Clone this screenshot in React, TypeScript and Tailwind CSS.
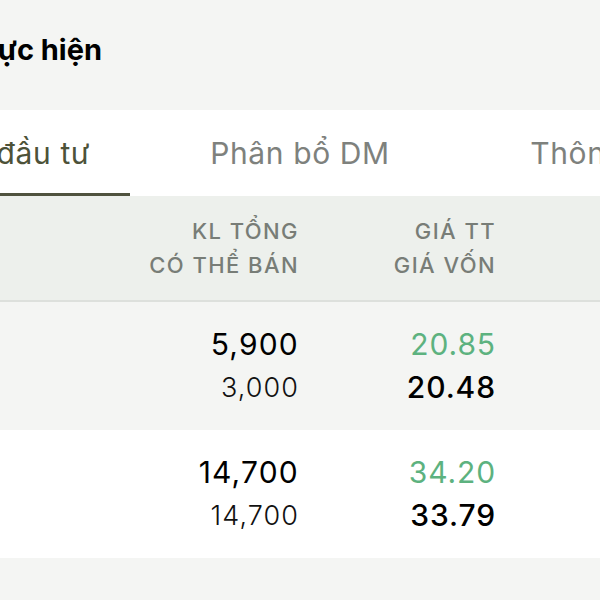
import { useState } from "react";

type Holding = {
  symbol: string;
  total: string;
  sellable: string;
  price: string;
  cost: string;
};

const holdings: Holding[] = [
  { symbol: "FPT", total: "5,900", sellable: "3,000", price: "20.85", cost: "20.48" },
  { symbol: "MWG", total: "14,700", sellable: "14,700", price: "34.20", cost: "33.79" },
];

const tabs = ["Danh mục đầu tư", "Phân bổ DM", "Thông tin khác"];

export default function App() {
  const [activeTab, setActiveTab] = useState(0);

  return (
    <div
      className="h-[600px] w-[600px] overflow-hidden bg-[#f4f5f3]"
      style={{ fontFamily: "Inter, Roboto, 'Noto Sans', sans-serif" }}
    >
      <div className="flex h-[110px] items-center pb-[10px]">
        <h1 className="ml-[-31px] whitespace-nowrap text-[29px] font-bold text-black">
          thực hiện
        </h1>
      </div>

      <div className="flex h-[86px] bg-white">
        {tabs.map((tab, i) => (
          <button
            key={tab}
            onClick={() => setActiveTab(i)}
            className={`flex h-full shrink-0 items-center whitespace-nowrap border-b-[3px] pt-[3px] text-[30px] tracking-[0.02em] ${
              i === 0 ? "w-[130px] justify-end pr-[40px]" : "w-[340px] justify-center"
            } ${
              activeTab === i
                ? "border-[#4f523e] text-[#4d5239]"
                : "border-transparent text-[#7e817d]"
            }`}
          >
            {tab}
          </button>
        ))}
      </div>

      <div className="flex h-[106px] items-center border-b-2 border-[#dde0dc] bg-[#edf0ec] text-[22px] font-medium uppercase leading-[34px] tracking-[0.065em] text-[#787d77]">
        <div className="w-[299px] shrink-0 text-right">
          <div>KL Tổng</div>
          <div>Có thể bán</div>
        </div>
        <div className="w-[197px] shrink-0 text-right">
          <div>Giá TT</div>
          <div>Giá vốn</div>
        </div>
      </div>

      {holdings.map((h, i) => (
        <div
          key={h.symbol}
          className={`flex h-[128px] items-center ${
            i % 2 === 0 ? "bg-[#f4f5f3]" : "bg-white"
          }`}
        >
          <div className="w-[299px] shrink-0 text-right">
            <div className="text-[30px] leading-[43px] tracking-[0.04em] text-black">
              {h.total}
            </div>
            <div className="text-[27px] font-light leading-[43px] tracking-[0.04em] text-[#111]">
              {h.sellable}
            </div>
          </div>
          <div className="w-[197px] shrink-0 text-right">
            <div className="text-[30px] leading-[43px] tracking-[0.03em] text-[#5db27f]">
              {h.price}
            </div>
            <div className="text-[30px] font-[480] leading-[43px] tracking-[0.03em] text-black">
              {h.cost}
            </div>
          </div>
        </div>
      ))}
    </div>
  );
}
